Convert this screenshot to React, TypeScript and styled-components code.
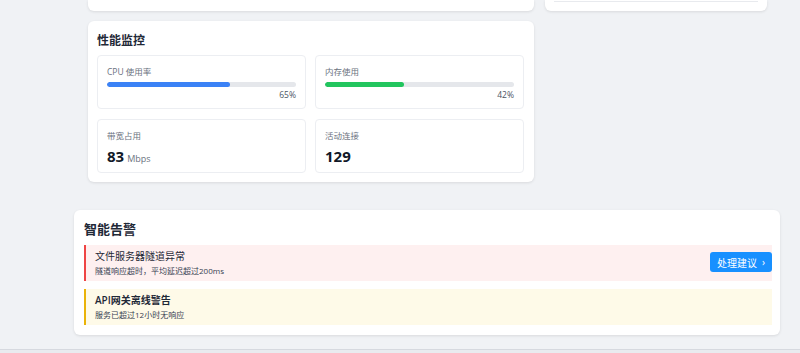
import styled, { createGlobalStyle } from 'styled-components';

const GlobalStyle = createGlobalStyle`
    html, body {
        margin: 0;
        padding: 0;
        background: #f0f2f5;
        font-family: "Open Sans", "Noto Sans CJK SC", sans-serif;
        color: #1f2937;
    }
`;

const Page = styled.div`
    width: 800px;
    height: 353px;
    overflow: hidden;
    display: flex;
    flex-direction: column;
`;

const TopGrid = styled.div`
    display: grid;
    grid-template-columns: 446px 222px;
    column-gap: 11px;
    row-gap: 10px;
    padding-left: 88px;
`;

const CardTail = styled.div`
    height: 11px;
    background: #fff;
    border-radius: 0 0 6px 6px;
    box-shadow: 0 1px 3px rgba(0, 0, 0, 0.1);
    box-sizing: border-box;
    padding: 0 9px;
`;

const TailLine = styled.div`
    height: 1px;
    margin-top: 1px;
    background: #e8eaee;
`;

const Card = styled.div`
    background: #fff;
    border-radius: 6px;
    box-shadow: 0 1px 3px rgba(0, 0, 0, 0.1);
    box-sizing: border-box;
`;

const PerfCard = styled(Card)`
    padding: 12px 10px 9px 9px;
`;

const CardTitle = styled.div<{ $size: number; $gap: number }>`
    font-size: ${p => p.$size}px;
    font-weight: 700;
    line-height: 16px;
    color: #1f2937;
    margin-bottom: ${p => p.$gap}px;
`;

const StatGrid = styled.div`
    display: grid;
    grid-template-columns: 1fr 1fr;
    grid-auto-rows: 54px;
    column-gap: 9px;
    row-gap: 10px;
`;

const StatBox = styled.div`
    border: 1px solid #eceef2;
    border-radius: 4px;
    box-sizing: border-box;
    padding: 9px 9px 0 9px;
    display: flex;
    flex-direction: column;
`;

const StatLabel = styled.div`
    font-size: 8.5px;
    line-height: 13px;
    color: #6b7280;
`;

const Track = styled.div`
    margin-top: 4px;
    height: 5px;
    border-radius: 3px;
    background: #e5e7eb;
    overflow: hidden;
`;

const Fill = styled.div<{ $color: string }>`
    height: 100%;
    border-radius: 3px;
    background: ${p => p.$color};
`;

const Percent = styled.div`
    margin-top: 2px;
    font-size: 8.5px;
    line-height: 12px;
    color: #4b5563;
    text-align: right;
`;

const Value = styled.div`
    margin-top: 4px;
    font-size: 15px;
    font-weight: 700;
    line-height: 20px;
    color: #111827;
`;

const Unit = styled.span`
    font-size: 9px;
    font-weight: 400;
    color: #6b7280;
    margin-left: 3px;
`;

const AlertCard = styled(Card)`
    margin: 28px 20px 0 74px;
    padding: 11px 8px 10px 10px;
    display: flex;
    flex-direction: column;
    row-gap: 8px;
`;

const AlertRow = styled.div<{ $bg: string; $bar: string }>`
    display: flex;
    align-items: center;
    justify-content: space-between;
    height: 36px;
    box-sizing: border-box;
    background: ${p => p.$bg};
    border-left: 2px solid ${p => p.$bar};
    padding-left: 9px;
`;

const AlertText = styled.div`
    display: flex;
    flex-direction: column;
    row-gap: 2px;
`;

const AlertTitle = styled.div<{ $bold?: boolean }>`
    font-size: 10px;
    line-height: 14px;
    color: #1f2937;
    font-weight: ${p => (p.$bold ? 600 : 400)};
`;

const AlertDesc = styled.div`
    font-size: 8px;
    line-height: 12px;
    color: #374151;
`;

const ActionButton = styled.button`
    border: none;
    background: #1890ff;
    color: #fff;
    font-family: inherit;
    font-size: 10px;
    height: 20px;
    width: 62px;
    border-radius: 3px;
    padding: 0;
    margin-top: -2px;
    display: flex;
    align-items: center;
    justify-content: center;
    column-gap: 5px;
`;

const Footer = styled.div`
    margin-top: 14px;
    flex: 1;
    border-top: 1px solid #d6d9df;
    background: #e9ebef;
`;

const stats = [
    { label: 'CPU 使用率', pct: 65, color: '#3b82f6' },
    { label: '内存使用', pct: 42, color: '#22c55e' },
];

const App = () => <Page>
    <GlobalStyle />
    <TopGrid>
        <CardTail />
        <CardTail><TailLine /></CardTail>
        <PerfCard>
            <CardTitle $size={12} $gap={6}>性能监控</CardTitle>
            <StatGrid>
                {stats.map(s => <StatBox key={s.label}>
                    <StatLabel>{s.label}</StatLabel>
                    <Track><Fill $color={s.color} style={{ width: `${s.pct}%` }} /></Track>
                    <Percent>{s.pct}%</Percent>
                </StatBox>)}
                <StatBox>
                    <StatLabel>带宽占用</StatLabel>
                    <Value>83<Unit>Mbps</Unit></Value>
                </StatBox>
                <StatBox>
                    <StatLabel>活动连接</StatLabel>
                    <Value>129</Value>
                </StatBox>
            </StatGrid>
        </PerfCard>
    </TopGrid>
    <AlertCard>
        <CardTitle $size={13} $gap={0}>智能告警</CardTitle>
        <AlertRow $bg="#fef0f0" $bar="#ef4444">
            <AlertText>
                <AlertTitle>文件服务器隧道异常</AlertTitle>
                <AlertDesc>隧道响应超时，平均延迟超过200ms</AlertDesc>
            </AlertText>
            <ActionButton>处理建议<span>›</span></ActionButton>
        </AlertRow>
        <AlertRow $bg="#fefae8" $bar="#eab308">
            <AlertText>
                <AlertTitle $bold>API网关离线警告</AlertTitle>
                <AlertDesc>服务已超过12小时无响应</AlertDesc>
            </AlertText>
        </AlertRow>
    </AlertCard>
    <Footer />
</Page>;

export default App;
